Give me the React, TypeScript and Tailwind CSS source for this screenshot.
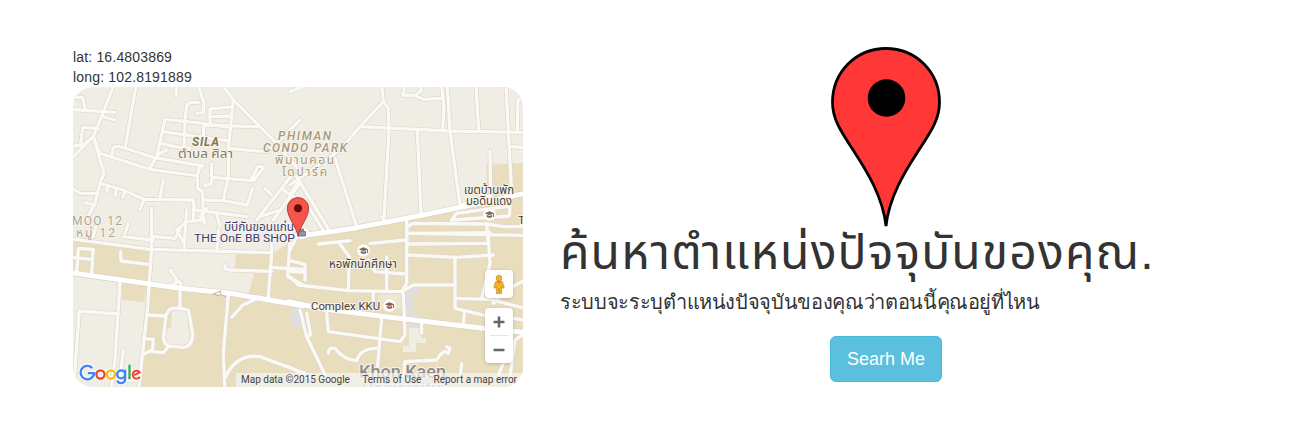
import React from "react";

type Tile = { transform: string; minor: string[]; major?: string[] };

const tiles: Tile[] = [
  {
    transform: "translate(60 40) scale(0.33333)",
    minor: [
      "M160 138L128 220L100 290L132 400L120 430L105 490L78 540",
      "M40 318L70 315L100 290", "M30 360L100 290",
      "M30 208L165 217", "M128 230L165 240", "M30 172L68 172L76 208", "M62 315L68 262L115 266",
      "M228 138L196 320", "M100 290L120 340L270 388L410 407",
      "M155 345L160 322L175 318L280 352L430 378", "M268 388L290 350L315 238L430 250L512 262",
      "M308 275L500 302", "M305 310L345 320L390 325", "M292 345L320 330", "M375 245L372 325",
      "M375 240L380 195L390 187L418 187", "M415 138L432 190L430 218L410 220",
      "M490 138L520 180L650 310L720 395", "M520 180L512 260L505 325L505 410",
      "M450 245L450 207L518 200", "M450 230L515 228", "M432 255L590 260",
      "M350 138L348 165", "M505 325L620 335L650 310L720 240", "M432 250L430 300",
      "M120 430L190 450L250 478L400 480L405 510L560 530", "M240 508L252 478",
      "M140 455L145 435", "M165 466L170 448", "M188 472L195 455",
      "M300 475L310 420", "M420 380L412 405L413 445L428 455L430 545",
      "M455 370L455 430L435 437", "M455 412L580 422L612 382L595 378L575 415",
      "M430 480L490 482L562 495L578 445", "M400 480L400 540", "M505 410L490 480",
      "M590 540L700 400", "M640 540L720 430", "M615 445L635 465", "M690 155L730 140",
      "M75 488L105 495", "M30 440L60 460L105 460",
    ],
  },
  {
    transform: "translate(290 80) scale(0.33333)",
    minor: [
      "M0 315L150 210L210 140L280 65L275 18", "M280 65L295 85L297 150L282 415",
      "M210 140L480 153L705 157", "M382 153L393 400", "M480 153L510 375", "M472 18L480 153",
      "M455 18L462 80L458 145", "M345 18L338 45L375 47L395 30L390 18", "M375 47L400 58L455 55",
      "M558 18L566 150", "M648 18L665 340", "M682 150L684 60L700 50", "M665 200L705 203",
      "M135 235L200 440", "M20 290L120 455", "M-20 330L55 380L102 455", "M0 345L22 310",
      "M600 212L602 348", "M350 415L350 490", "M485 420L500 400L660 378L658 408L485 420",
      "M355 438L370 430L590 432L640 440L705 440", "M355 460L705 466", "M590 432L595 490", "M280 415L275 410", "M510 375L602 347",
    ],
    major: ["M0 472L120 455L200 443L350 415L530 378L705 340"],
  },
  {
    transform: "translate(60 210) scale(0.33333)",
    minor: [
      "M275 -5L275 120L262 300L235 545", "M30 86L270 118L635 128", "M635 85L635 130L625 260",
      "M50 187L55 115L100 118L95 187", "M40 143L95 148", "M182 125L183 153L265 163",
      "M180 215L165 450L155 530", "M42 515L58 303L175 312", "M190 420L180 510L230 510",
      "M360 235L360 295", "M330 180L348 205L352 216L330 230", "M348 210L362 218L360 235",
      "M325 303Q335 288 385 300L398 370Q398 410 370 412L325 408Q305 395 312 370L318 315Z",
      "M265 315L317 318", "M250 385L280 388L278 418L250 434", "M275 425L310 428L325 410",
      "M505 255L490 430L495 545", "M600 262L548 285L515 322", "M497 500Q530 430 600 440L735 490",
      "M495 165Q490 180 510 180L635 184", "M630 172L730 178",
      "M190 80L280 90", "M380 0L372 118", "M370 95L350 60L380 35L435 30", "M470 125L475 60",
      "M195 70L205 40", "M435 40L420 20L440 -5", "M690 90L683 200L730 225", "M280 80L345 85L360 60",
      "M100 80L110 40", "M600 20L660 0", "M470 10L480 50",
    ],
    major: ["M30 188L360 235L510 250L730 287"],
  },
  {
    transform: "translate(290 230) scale(0.33333)",
    minor: [
      "M85 42L180 32", "M148 40L178 80L175 180", "M0 92L45 103L45 150", "M0 125L45 127",
      "M355 10L600 8", "M355 42L595 40", "M355 75L500 82L610 75", "M495 82L495 235L600 260",
      "M350 -20L350 160L335 185", "M0 140L25 165L175 182L335 185L370 165L495 165",
      "M290 80L290 180", "M240 40L350 30", "M235 90L255 125L345 132", "M20 20L0 60",
      "M500 205L600 208L705 235", "M593 0L600 100L575 205", "M523 250L520 285", "M610 220L640 185L705 150",
      "M30 240L50 320L110 445", "M50 320L62 315L50 250", "M110 250L115 305L330 335L345 315L340 190",
      "M250 185L250 220", "M275 265L260 440", "M115 370Q115 350 135 355Q160 390 200 392Q210 355 260 355",
      "M340 440L345 395L440 390Q460 355 475 370", "M395 275L395 310", "M-5 410L65 445",
      "M705 310L675 330L660 440", "M515 400L510 445", "M475 370L480 355L470 350",
      "M640 400L625 435", "M655 263L705 270",
    ],
    major: ["M-5 215L100 237L300 262L580 295L705 307"],
  },
];

function Roads({ kind, color, width }: { kind: "minor" | "major"; color: string; width: number }) {
  return (
    <>
      {tiles.map((t, i) => (
        <g key={i} transform={t.transform} fill="none" stroke={color} strokeWidth={width} strokeLinecap="round" strokeLinejoin="round">
          {(t[kind] ?? []).map((d) => (
            <path key={d} d={d} />
          ))}
        </g>
      ))}
    </>
  );
}

function Poi({ x, y, color = "#7b6a58" }: { x: number; y: number; color?: string }) {
  return (
    <g transform={`translate(${x} ${y})`}>
      <circle r="6.2" fill="#fff" />
      <path d="M-4.8 -1.2L0 -3.2L4.8 -1.2L0 .8ZM-2.7 .3V2.4Q0 4.2 2.7 2.4V.3L0 1.5ZM3.6 -.8H4.6V2.6H3.6Z" fill={color} />
    </g>
  );
}

type LabelProps = { x: number; y: number; w: number; size: number; color: string; children: string; weight?: number; italic?: boolean; spaced?: boolean };

function Label({ x, y, w, size, color, children, weight = 400, italic, spaced }: LabelProps) {
  return (
    <text x={x} y={y} textLength={w} lengthAdjust={spaced ? "spacing" : "spacingAndGlyphs"} fontSize={size} fill={color} fontWeight={weight} fontStyle={italic ? "italic" : "normal"} stroke="#f7f4ec" strokeWidth="2" strokeLinejoin="round" paintOrder="stroke">
      {children}
    </text>
  );
}

function MapDrawing() {
  return (
    <svg viewBox="73 87 450 300" className="block h-[300px] w-[450px] font-['Roboto','Noto_Sans_Thai',sans-serif]">
      <path fill="#f0ede5" d="M73 87H523V387H73Z" />
      <g fill="#e8ddbd">
        <path d="M73 240L150 249L147 284L73 272Z" />
        <path d="M122 283L147 285L144 302L122 300Z" />
        <path d="M147 285L138 390H523V163L486 165L487 177L484 203L407 218L357 228L300 236L273 253H236L235 270L254 273L249 293L182 288Z" />
      </g>
      <path fill="#f0ede5" d="M172 310H187L188 327L190 331L188 345H166L165 331L171 327Z" />
      <path fill="#f0ede5" d="M409 328H421V338H426V343H416V352H403V346H409Z" />
      <path fill="#f0ede5" d="M378 294H401V309H378Z" opacity=".6" />
      <path fill="#dedede" d="M292 306H301V328H292ZM407 287H419V293H412V299H406ZM406 300H414V314H420V328H407Z" />
      <Roads kind="minor" color="#ded7ca" width={14} />
      <Roads kind="major" color="#d8d1c3" width={19} />
      <Roads kind="minor" color="#faf9f6" width={10} />
      <Roads kind="major" color="#ffffff" width={15} />
      <path d="M213 294L221 291L220 294L226 297M213 294L220 296" fill="none" stroke="#bdb5a7" strokeWidth="1" />

      <Label x={192} y={146} w={27} size={12} color="#857750" weight={700} italic spaced>SILA</Label>
      <Label x={178} y={158} w={55} size={12} color="#85795d">ตำบล ศิลา</Label>
      <Label x={278} y={140} w={53} size={12} color="#a69a80" weight={500} italic spaced>PHIMAN</Label>
      <Label x={263} y={152} w={84} size={12} color="#a69a80" weight={500} italic spaced>CONDO PARK</Label>
      <Label x={275} y={164} w={59} size={12} color="#a69a80" spaced>พิมานคอน</Label>
      <Label x={282} y={176} w={45} size={12} color="#a69a80" spaced>โดปาร์ค</Label>
      <Label x={72} y={225} w={50} size={12} color="#b0a793" spaced>MOO 12</Label>
      <Label x={76} y={237} w={39} size={12} color="#b0a793" spaced>หมู่ 12</Label>
      <Label x={224} y={231} w={70} size={12} color="#3d3d70">บีบีกันขอนแก่น</Label>
      <Label x={194} y={242} w={101} size={11.5} color="#3d3d70">THE OnE BB SHOP</Label>
      <Label x={464} y={194} w={50} size={12} color="#483f38">เขตบ้านพัก</Label>
      <Label x={466} y={205} w={46} size={12} color="#483f38">มอดินแดง</Label>
      <Label x={329} y={268} w={68} size={12} color="#483f38">หอพักนักศึกษา</Label>
      <Label x={311} y={310} w={69} size={11.5} color="#483f38">Complex KKU</Label>
      <Label x={518} y={224} w={7} size={11.5} color="#483f38">T</Label>
      <Label x={359} y={378} w={87} size={18} color="#918c83" weight={500}>Khon Kaen</Label>
      <Label x={362} y={395} w={78} size={18} color="#b7b09e" weight={500}>University</Label>
      <Poi x={489.5} y={214.5} />
      <Poi x={363.5} y={250.5} />
      <Poi x={389.5} y={305.5} color="#965953" />
      <circle cx="302" cy="233" r="6" fill="#fff" />
      <path d="M298.500 231.500H305.500V236H298.500ZM300.500 231V229H303.500V231" fill="#9292ad" stroke="#646483" strokeWidth=".8" />
      <path d="M298 236.500C296.600 226.500 287.400 218 287.400 208.200A10.600 10.600 0 0 1 308.600 208.200C308.600 218 299.400 226.500 298 236.500Z" fill="#f5564c" stroke="#b33b35" strokeWidth="1" />
      <circle cx="298" cy="208.300" r="4" fill="#5d0d0b" />
    </svg>
  );
}

function Logo() {
  return (
    <svg viewBox="0 0 66 26" className="absolute bottom-px left-[6px] h-[25px] w-[63.5px]" fill="none" strokeWidth="2.4">
      <g stroke="#fff" strokeWidth="4.500" opacity=".7">
        <path d="M14.400 7A7 7 0 1 0 16 12.600H9.300" /><circle cx="22.300" cy="14" r="4.200" /><circle cx="33.200" cy="14" r="4.200" />
        <circle cx="43.800" cy="14" r="4.100" /><path d="M48 9.500V18Q48 23 43.800 23Q40.800 23 39.800 20.500M52.300 4V19M64 16.300A4.100 4.100 0 1 1 62.800 11.300L56.400 15.100" />
      </g>
      <path d="M13.800 7.200A7 7 0 1 0 15.700 12.600H9.300" stroke="#4285f4" />
      <circle cx="22.300" cy="14" r="4.200" stroke="#ea4335" />
      <circle cx="33.200" cy="14" r="4.200" stroke="#fbbc05" />
      <circle cx="43.800" cy="14" r="4.100" stroke="#4285f4" />
      <path d="M48 9.200V18Q48 23 43.800 23Q40.800 23 39.700 20.400" stroke="#4285f4" />
      <path d="M52.500 4V19" stroke="#34a853" />
      <path d="M63.300 16.500A4.100 4.100 0 1 1 63.200 11.800L57.200 14.800" stroke="#ea4335" strokeWidth="2" />
    </svg>
  );
}

function Pegman() {
  return (
    <svg viewBox="0 0 14 22" className="h-[21px] w-[14px]">
      <path d="M3.500 8Q7 6 10.500 8L12.500 14L11.200 15L10 12.500L9.700 20.500H7.500L7 15L6.500 20.500H4.300L4 12.500L2.800 15L1.500 14Z" fill="#f7b51b" stroke="#b8862f" strokeWidth=".7" />
      <circle cx="7" cy="4.300" r="3" fill="#f9b51d" stroke="#b8862f" strokeWidth=".7" />
      <path d="M4.500 8L7 10L9.500 8Z" fill="#e4741e" />
    </svg>
  );
}

export default function App() {
  return (
    <main className="flex h-[421px] w-[1293px] overflow-hidden bg-white pl-[73px] pt-[47px] font-['Liberation_Sans',Arial,sans-serif] text-[#333]">
      <section className="w-[450px] shrink-0 text-sm leading-5">
        <p className="tracking-[0.17px]">lat: 16.4803869</p>
        <p className="tracking-[0.17px]">long: 102.8191889</p>
        <div className="relative h-[300px] overflow-hidden rounded-[20px]">
          <MapDrawing />
          <Logo />
          <div className="absolute bottom-[89px] right-[10px] flex h-7 w-7 items-center justify-center rounded-sm bg-white shadow-[0_1px_4px_-1px_rgba(0,0,0,0.3)]">
            <Pegman />
          </div>
          <div className="absolute bottom-6 right-[10px] flex h-[55px] w-7 flex-col items-center rounded-sm bg-white shadow-[0_1px_4px_-1px_rgba(0,0,0,0.3)]">
            <span className="flex h-[27px] items-center">
              <svg viewBox="0 0 12 12" className="h-3 w-3"><path d="M.5 6H11.5M6 .5V11.5" stroke="#666" strokeWidth="2.6" /></svg>
            </span>
            <span className="h-px w-[19px] bg-[#e6e6e6]" />
            <span className="flex h-[27px] items-center">
              <svg viewBox="0 0 12 12" className="h-3 w-3"><path d="M.5 6H11.5" stroke="#666" strokeWidth="2.6" /></svg>
            </span>
          </div>
          <div className="absolute bottom-0 right-0 flex h-[14px] w-[287px] items-center justify-between bg-[#f5f5f5]/70 pl-[5px] pr-[6px] font-[Roboto,sans-serif] text-[10px] leading-[14px] text-[#444]">
            <span className="w-[109px] whitespace-nowrap">Map data ©2015 Google</span>
            <span className="whitespace-nowrap">Terms of Use</span>
            <span className="whitespace-nowrap">Report a map error</span>
          </div>
        </div>
      </section>
      <section className="ml-[37px] flex w-[652px] flex-col">
        <svg viewBox="0 0 112 180" className="ml-[270px] block h-[180px] w-[112px] shrink-0">
          <path d="M56 179C53 151 38 126 25 106C12 86 2.500 73 2.500 55.500C2.500 25 26 1.500 56 1.500S109.500 25 109.500 55.500C109.500 73 100 86 87 106C74 126 59 151 56 179Z" fill="#ff3737" stroke="#000" strokeWidth="2.8" />
          <circle cx="56.500" cy="51" r="18.800" />
        </svg>
        <h1 className="h-[53px] whitespace-nowrap font-['Liberation_Sans','Noto_Sans_Thai',sans-serif] text-[48px] leading-[51px] tracking-[1.15px]">ค้นหาตำแหน่งปัจจุบันของคุณ.</h1>
        <p className="mt-[7px] h-[30px] whitespace-nowrap text-[20px] leading-[30px] tracking-[-0.35px]">ระบบจะระบุตำแหน่งปัจจุบันของคุณว่าตอนนี้คุณอยู่ที่ไหน</p>
        <button className="ml-[270px] mt-[19px] h-[46px] w-[112px] rounded-md border border-[#46b8da] bg-[#5bc0de] text-lg leading-6 text-white">Searh Me</button>
      </section>
    </main>
  );
}
